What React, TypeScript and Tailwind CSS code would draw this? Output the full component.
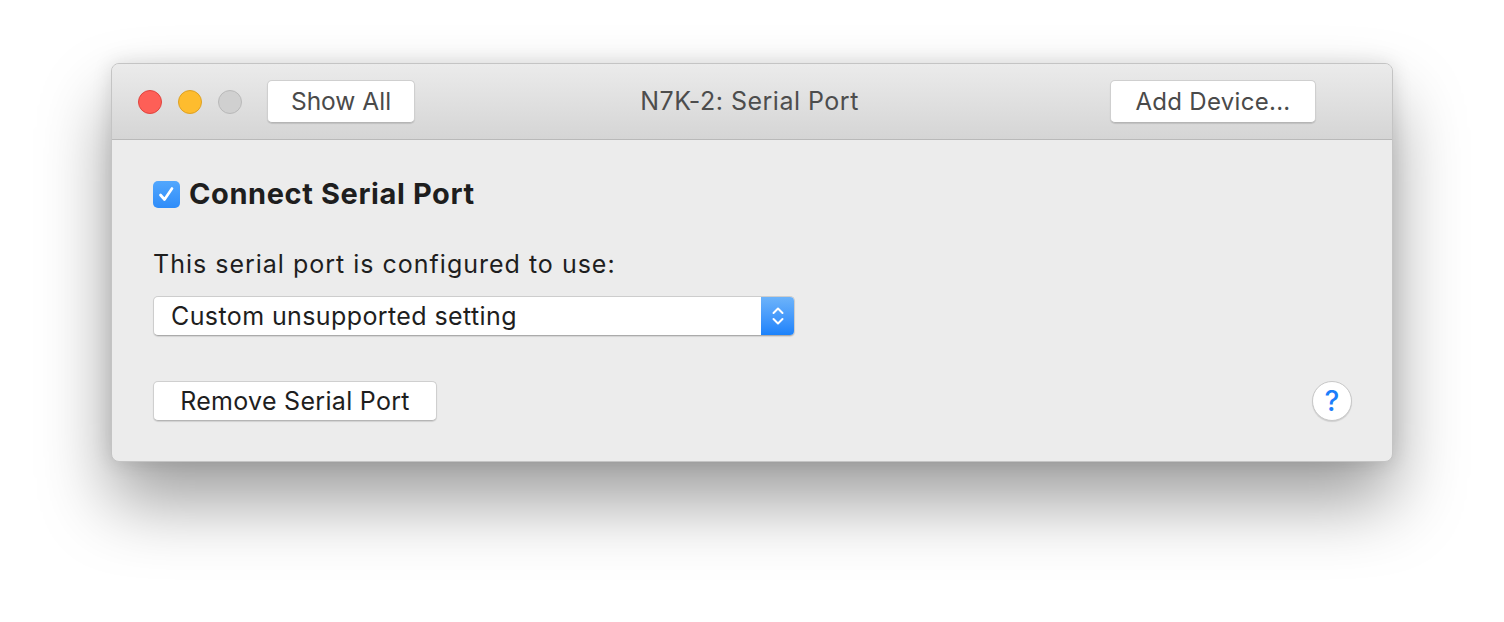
import React from 'react';

const font = { fontFamily: 'Inter, "Liberation Sans", sans-serif' };

function Light({ color, border }: { color: string; border: string }) {
  return <span className={`block w-[24px] h-[24px] rounded-full border ${color} ${border}`} />;
}

function MacButton({ children, className = '' }: { children: React.ReactNode; className?: string }) {
  return (
    <button
      className={`flex items-center justify-center rounded-[5px] bg-white border border-[#cfcfcf] border-b-[#b5b5b5] shadow-[0_1px_1px_rgba(0,0,0,0.12)] leading-none ${className}`}
    >
      {children}
    </button>
  );
}

export default function App() {
  return (
    <div className="min-h-screen w-full bg-white pt-[63px] pl-[111px]" style={font}>
      <div className="w-[1282px] h-[399px] rounded-[8px] overflow-hidden border border-[#c4c4c4] bg-[#ececec] shadow-[0_40px_70px_rgba(0,0,0,0.38),0_0_20px_rgba(0,0,0,0.12)] flex flex-col">
        {/* title bar */}
        <div className="relative h-[76px] flex items-center border-b border-[#b9b9b9] bg-gradient-to-b from-[#ebebeb] to-[#d5d5d5]">
          <div className="flex items-center gap-[16px] pl-[26px]">
            <Light color="bg-[#fe5f57]" border="border-[#e0443e]" />
            <Light color="bg-[#febc2e]" border="border-[#dea123]" />
            <Light color="bg-[#d0d0d0]" border="border-[#b9b9b9]" />
          </div>
          <MacButton className="ml-[25px] w-[148px] h-[43px] text-[24.5px] text-[#4a4a4a]">Show All</MacButton>
          <div className="absolute left-0 right-0 top-0 h-full flex items-center justify-center pointer-events-none">
            <span className="text-[25px] tracking-[0.5px] text-[#4d4d4d] ml-[-5px] leading-none">N7K-2: Serial Port</span>
          </div>
          <MacButton className="ml-auto mr-[76px] w-[206px] h-[43px] text-[24px] tracking-[0.3px] text-[#4a4a4a]">
            Add Device...
          </MacButton>
        </div>

        {/* content */}
        <div className="flex-1 flex flex-col px-[40px] pt-[40px]">
          <div className="flex items-center gap-[9px] h-[28px]">
            <span className="w-[27px] h-[27px] ml-[1px] rounded-[5px] bg-gradient-to-b from-[#52a7fd] to-[#2e8cf9] flex items-center justify-center">
              <svg width="23" height="23" viewBox="0 0 23 23" fill="none">
                <path d="M5.5 12 L9.5 16.5 L17 5.5" stroke="white" strokeWidth="2.7" strokeLinecap="round" strokeLinejoin="round" />
              </svg>
            </span>
            <span className="text-[29px] leading-[28px] font-bold text-[#1e1e1e] tracking-[0.6px]">Connect Serial Port</span>
          </div>

          <p className="mt-[41px] ml-[1px] text-[25px] leading-[30px] tracking-[1px] text-[#1e1e1e]">
            This serial port is configured to use:
          </p>

          <div className="mt-[17px] ml-[1px] w-[642px] h-[40px] flex rounded-[5px] bg-white border border-[#cdcdcd] border-b-[#ababab] shadow-[0_1px_1px_rgba(0,0,0,0.1)] overflow-hidden">
            <span className="flex-1 flex items-center pl-[17px] text-[25px] leading-none tracking-[0.4px] text-[#1e1e1e]">
              Custom unsupported setting
            </span>
            <span className="w-[33px] h-full bg-gradient-to-b from-[#6cb3fa] to-[#1a82fb] flex items-center justify-center">
              <svg width="16" height="28" viewBox="0 0 16 28" fill="none">
                <path d="M3.5 11 L8 6.5 L12.5 11" stroke="white" strokeWidth="2" strokeLinecap="round" strokeLinejoin="round" />
                <path d="M3.5 17 L8 21.5 L12.5 17" stroke="white" strokeWidth="2" strokeLinecap="round" strokeLinejoin="round" />
              </svg>
            </span>
          </div>

          <div className="mt-[45px] ml-[1px] flex items-center justify-between">
            <MacButton className="w-[284px] h-[40px] text-[25px] tracking-[0.3px] text-[#1e1e1e]">Remove Serial Port</MacButton>
            <span className="w-[40px] h-[40px] rounded-full bg-white border border-[#c8c8c8] shadow-[0_1px_1px_rgba(0,0,0,0.12)] flex items-center justify-center text-[28px] font-medium leading-none text-[#1b7efb]">
              ?
            </span>
          </div>
        </div>
      </div>
    </div>
  );
}
